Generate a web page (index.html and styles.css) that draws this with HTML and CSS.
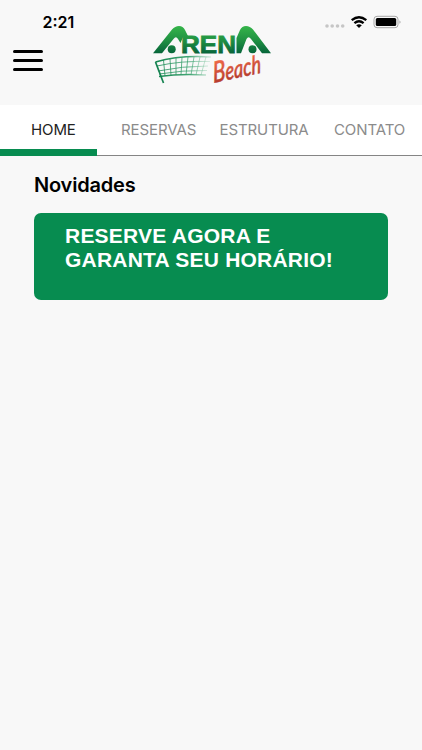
FILE: index.html
```html
<!DOCTYPE html>
<html lang="pt-BR">
<head>
<meta charset="utf-8">
<meta name="viewport" content="width=device-width, initial-scale=1">
<title>Arena Beach</title>
<link rel="stylesheet" href="styles.css">
</head>
<body>
<header class="header">
  <div class="left">
    <time class="clock">2:21</time>
    <button class="menu" aria-label="Menu"><span></span><span></span><span></span></button>
  </div>
  <svg class="logo" viewBox="0 0 135 75" role="img" aria-label="Arena Beach">
    <defs>
      <linearGradient id="green" gradientUnits="userSpaceOnUse" x1="0" y1="11" x2="0" y2="38">
        <stop offset="0" stop-color="#35b54a"/><stop offset=".5" stop-color="#219343"/><stop offset="1" stop-color="#07663a"/>
      </linearGradient>
      <linearGradient id="net" gradientUnits="userSpaceOnUse" x1="10" y1="0" x2="68" y2="0"><stop offset="0" stop-color="#168650"/><stop offset=".6" stop-color="#43a675"/><stop offset="1" stop-color="#9cd3b5" stop-opacity=".3"/></linearGradient>
      <linearGradient id="red" x1="0" y1="0" x2="0" y2="1"><stop offset=".2" stop-color="#f06a48"/><stop offset=".85" stop-color="#b53a2b"/></linearGradient>
    </defs>
    <g fill="url(#green)">
      <path d="M8 38.200L27 14.500Q30 11 34 11Q38 11 40 15L43 21H38.500L35.500 28L33 24Q31 20.500 28.500 24L17 38.200Z"/>
      <circle cx="26.700" cy="34.300" r="4"/>
      <path d="M126 38.200L108 14.500Q105 11 101 11Q97 11 95 15L91.500 23V38.200H96L101.500 24Q103.500 20.500 106 24L117 38.200Z"/>
      <circle cx="107.500" cy="34.300" r="4"/>
      <text class="logo-name" x="36" y="37.700" textLength="55" lengthAdjust="spacingAndGlyphs">REN</text>
    </g>
    <g fill="none" stroke="url(#net)">
      <path stroke-width="1.500" d="M10.500 47Q35 40 66 42"/>
      <path stroke-width="1.300" d="M14 61.500Q35 58.500 61 60"/>
      <path stroke-width=".8" d="M12 51Q36 45.500 65 46.500M13 56Q37 51 63 51M14 59Q38 55 62 55.500M18.500 45L20 61M25 44L26 60.500M31 43V60M37 42.500L36 60M43 42L41 60M49 42L46 60M55 42L51 60M61 42L56 60"/>
    </g>
    <path d="M10.500 47L18.500 68" fill="none" stroke="#148250" stroke-width="1.700"/>
    <g transform="translate(68.500 68) rotate(-12) skewX(-8)">
      <text class="logo-beach" textLength="49" lengthAdjust="spacingAndGlyphs" fill="url(#red)"><tspan class="initial">B</tspan>each</text>
    </g>
  </svg>
  <svg class="status" viewBox="0 0 80 20" aria-hidden="true">
    <g fill="#c6c6c6"><circle cx="4" cy="12" r="1.800"/><circle cx="9.200" cy="12" r="1.800"/><circle cx="14.500" cy="12" r="1.800"/><circle cx="19.700" cy="12" r="1.800"/></g>
    <g fill="none" stroke="#000" stroke-width="2.300"><path d="M28.700 6.200Q36 .2 43.300 6.200"/><path d="M31.400 9.200Q36 5.300 40.600 9.200"/></g>
    <path d="M33.200 11.300Q36 9 38.800 11.300L36 14Z"/>
    <rect x="51" y="2.300" width="24" height="11.400" rx="3" fill="none" stroke="#a7a7a7"/>
    <rect x="52.800" y="4" width="20.400" height="8" rx="1.500"/>
    <path d="M76.500 6.200Q78.500 8 76.500 9.800Z" fill="#999"/>
  </svg>
</header>
<nav class="tabs">
  <a class="tab home active"><span>HOME</span></a>
  <a class="tab reservas"><span>RESERVAS</span></a>
  <a class="tab estrutura"><span>ESTRUTURA</span></a>
  <a class="tab contato"><span>CONTATO</span></a>
</nav>
<main class="content">
  <h1>Novidades</h1>
  <section class="banner">RESERVE AGORA E<br>GARANTA SEU HORÁRIO!</section>
</main>
</body>
</html>
```
FILE: styles.css
```css
* { box-sizing: border-box; }
body { margin: 0; min-height: 750px; background: #f8f8f8; color: #000; font-family: Inter, sans-serif; }
.header { height: 105px; display: grid; grid-template-columns: 145px 135px 1fr; }
.left { padding: 13px 0 0 13px; }
.clock { display: block; margin-left: 29.5px; font-size: 16px; font-weight: 600; line-height: 19px; }
.menu { display: flex; flex-direction: column; gap: 6px; width: 30px; margin: 18px 0 0 .4px; padding: 0; border: 0; background: none; }
.menu span { height: 3px; width: 30px; border-radius: 2px; background: #000; }
.logo { width: 135px; height: 75px; margin-top: 15px; }
.logo-name { font: 700 23px "Liberation Sans", sans-serif; stroke: url(#green); stroke-width: .8px; }
.logo-beach { font: italic 500 25px Lato, sans-serif; stroke: url(#red); stroke-width: .5px; }
.initial { font-size: 29px; }
.status { width: 80px; height: 20px; margin: 14px 0 0 43px; }
.tabs { height: 51px; display: grid; grid-template-columns: 97px 112px 109px 104px; background: #fff; border-bottom: 1px solid #858585; }
.tab { height: 51px; padding-top: 15px; color: #8b8b8b; font-size: 15px; line-height: 20px; letter-spacing: -.1px; white-space: nowrap; }
.active { color: #222; border-bottom: 7px solid #078c50; }
.home { padding-left: 31px; }
.reservas { padding-left: 24px; }
.estrutura { padding-left: 10.5px; }
.contato { padding-left: 16px; }
.content { padding: 17px 34px 0; }
h1 { margin: 0; font-size: 20px; font-weight: 600; line-height: 24px; letter-spacing: -.2px; }
.banner { height: 87px; margin-top: 16px; padding: 11px 31px; border-radius: 7px; background: #078c50; color: #fff; font: 700 21px/24px "Liberation Sans", sans-serif; letter-spacing: .22px; white-space: nowrap; }
```
